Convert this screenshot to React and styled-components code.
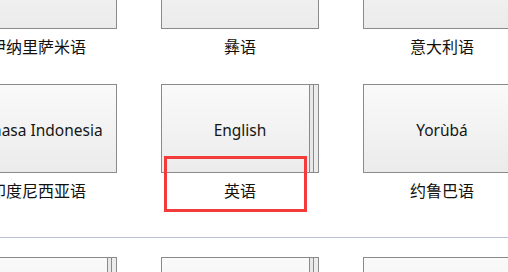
import React from 'react'
import styled, { createGlobalStyle } from 'styled-components'

// css
const GlobalStyle = createGlobalStyle`
	body {
		margin: 0;
		background: #ffffff;
		overflow: hidden;
		font-family: "Noto Sans", "Noto Sans CJK SC", sans-serif;
	}
`
const StylePage = styled.div`
	width: 508px;
	height: 272px;
	overflow: hidden;
	background: #ffffff;
`
const StyleGrid = styled.div`
	display: grid;
	grid-template-columns: repeat(3, 158px);
	column-gap: 44px;
	margin-left: -41px;
	margin-top: ${props => props.offset || 0}px;
`
const StyleCell = styled.div`
	position: relative;
	display: flex;
	flex-direction: column;
`
const StyleTile = styled.div`
	position: relative;
	box-sizing: border-box;
	height: 89px;
	border: 1px solid #8a8a8a;
	background: linear-gradient(to bottom, #fafafa, #ebebeb);
	display: flex;
	align-items: center;
	justify-content: center;
	padding-top: 3px;
	font-family: "Noto Sans", sans-serif;
	font-size: 15.5px;
	color: #161616;
	white-space: nowrap;

	&::after {
		content: '';
		display: ${props => (props.stacked ? 'block' : 'none')};
		position: absolute;
		top: 0;
		bottom: 0;
		right: 0;
		width: 9px;
		background: linear-gradient(to right, #8a8a8a 0 1px, #e8e8e8 1px 4px, #8a8a8a 4px 5px, #ececec 5px 9px);
	}
`
const StyleLabel = styled.div`
	box-sizing: border-box;
	height: 55px;
	padding-top: 7px;
	line-height: 20px;
	text-align: center;
	font-family: "Noto Sans CJK SC", "Noto Sans", sans-serif;
	font-size: 16px;
	color: #111111;
	white-space: nowrap;
`
const StyleHighlight = styled.div`
	position: absolute;
	left: 3px;
	top: 72px;
	width: 143px;
	height: 56px;
	box-sizing: border-box;
	border: 3px solid #f43b3b;
	pointer-events: none;
`
const StyleDivider = styled.div`
	height: 1px;
	background: #b8c0d8;
	margin: 9px 0 19px;
`

const languages = [
	{ name: 'Anarâškielâ', label: '伊纳里萨米语' },
	{ name: 'ꆈꌠꉙ', label: '彝语' },
	{ name: 'Italiano', label: '意大利语' },
	{ name: 'Bahasa Indonesia', label: '印度尼西亚语' },
	{ name: 'English', label: '英语', stacked: true, selected: true },
	{ name: 'Yorùbá', label: '约鲁巴语' },
]

const moreLanguages = [
	{ name: 'Deutsch', label: '德语', stacked: true },
	{ name: 'Español', label: '西班牙语', stacked: true },
	{ name: 'Français', label: '法语' },
]

function LanguageCell({ lang }) {
	return (
		<StyleCell>
			<StyleTile stacked={lang.stacked}>{lang.name}</StyleTile>
			<StyleLabel>{lang.label}</StyleLabel>
			{lang.selected && <StyleHighlight />}
		</StyleCell>
	)
}

// Composant
function App() {
	return (
		<StylePage>
			<GlobalStyle />
			<StyleGrid offset={-60}>
				{languages.map((lang) => (
					<LanguageCell key={lang.name} lang={lang} />
				))}
			</StyleGrid>
			<StyleDivider />
			<StyleGrid>
				{moreLanguages.map((lang) => (
					<LanguageCell key={lang.name} lang={lang} />
				))}
			</StyleGrid>
		</StylePage>
	)
}

export default App
